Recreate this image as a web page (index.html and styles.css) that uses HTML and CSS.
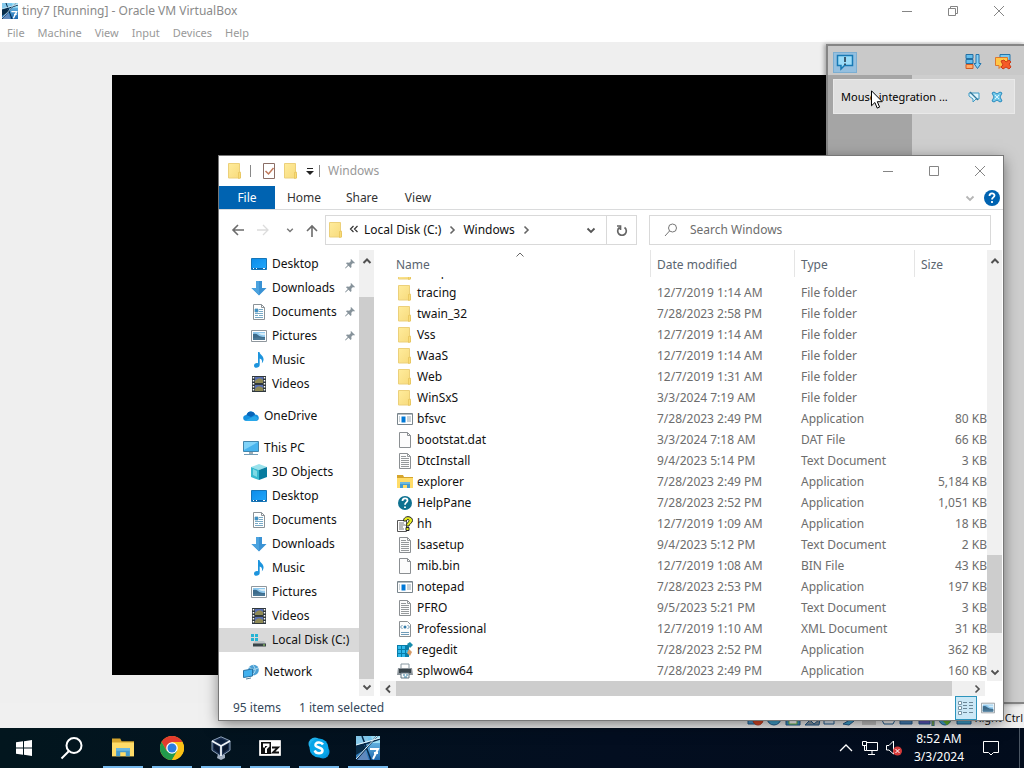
FILE: index.html
```
<!DOCTYPE html>
<html lang="en">
<head>
<meta charset="utf-8">
<meta name="viewport" content="width=device-width, initial-scale=1">
<title>tiny7 [Running] - Oracle VM VirtualBox</title>
<link rel="stylesheet" href="styles.css">
</head>
<body>
<svg class="sprite" aria-hidden="true">
  <defs>
    <linearGradient id="g-folder" x1="0" x2="1" y2="1"><stop offset="0" stop-color="#ffec9c"/><stop offset="1" stop-color="#f7da7c"/></linearGradient>
    <linearGradient id="g-blue" x1="0" x2="1" y2="1"><stop offset="0" stop-color="#0b8cea"/><stop offset="1" stop-color="#22a8fb"/></linearGradient>
    <linearGradient id="g-tiny" x1="0" x2="0" y2="1"><stop offset="0" stop-color="#7fd0f5"/><stop offset="1" stop-color="#1e68ae"/></linearGradient>
  </defs>
  <symbol id="folder" viewBox="0 0 16 16"><path d="M1.500.5h11v9.500l1 1v4h-12z" fill="url(#g-folder)" stroke="#ecd07a"/><path d="M11.500 9.500l2-.5v6l-2 .5z" fill="#f9dc79" stroke="#e3bd51" stroke-width=".6"/></symbol>
  <symbol id="desktop" viewBox="0 0 16 16"><path d="M.5 2.500h15v11H.5z" fill="url(#g-blue)" stroke="#1675b7"/><path d="M1 12.500h14" stroke="#0c64a9"/><path d="M2 12.500h1m2 0h1m6 0h2" stroke="#fff"/></symbol>
  <symbol id="download" viewBox="0 0 16 16"><path d="M5 1h6v7h4.500L8 15.500.5 8H5z" fill="#3a92d4"/><path d="M5 1h3v14L.5 8H5z" fill="#4ca3df"/></symbol>
  <symbol id="document" viewBox="0 0 16 16"><path d="M2.500.5h8l3 3v12h-11z" fill="#fff" stroke="#8b9297"/><path d="M10.500.5v3h3" fill="none" stroke="#8b9297"/><path d="M4 5h3v3H4zm4 .5h4m-4 2h4m-8 2h8m-8 2h3m1 0h4m-8 2h8" fill="#338fcd" stroke="#5794b8" stroke-width=".8"/></symbol>
  <symbol id="picture" viewBox="0 0 16 16"><path d="M.5 2.500h15v11H.5z" fill="#fff" stroke="#8f979d"/><path d="M2 4h12v8H2z" fill="#8fc8ed"/><path d="M2 6q3-1 5 1t7 2v3H2z" fill="#3c6b8b"/><path d="M2 10q5-1 12 0v2H2z" fill="#4a7896"/><path d="M7 5h7v2q-3 1-7-2" fill="#d6edf9"/></symbol>
  <symbol id="music" viewBox="0 0 16 16"><path d="M7 0h1.500c.3 3 4.500 3.600 4 8-.2 1.600-1 2.500-1.700 3.300.7-2.700-.1-4.200-2.100-4.800V13c0 3-5.700 4-5.700.7C3 11.500 5.400 10.500 7 11.200z" fill="#1d94dd"/></symbol>
  <symbol id="video" viewBox="0 0 16 16"><path d="M1 0h14v16H1z" fill="#30383d"/><path d="M4 1h8v6H4zM4 9h8v6H4z" fill="#586fb4"/><path d="M4 5q4-5 8-1v3H4zM4 13q3-5 8-1v3H4z" fill="#8f8a55"/><path d="M2.500 1v14m11-14v14" stroke="#fff" stroke-width="1.500" stroke-dasharray="1.500 1.500"/></symbol>
  <symbol id="cloud" viewBox="0 0 16 16"><path d="M4 13C-1 13-1 7 3.500 7 5 2 11 3 12 6.500c5 0 5 6.500.5 6.500z" fill="#1490df"/><path d="M3.500 7C5 2 11 3 12 6.500L8 9z" fill="#0864b8"/><path d="M2 12.500L12 8q5 2 1 5H4z" fill="#29a8ea"/></symbol>
  <symbol id="pc" viewBox="0 0 16 16"><path d="M.5 1.500h15v10H.5z" fill="#47b3ee" stroke="#4386ad"/><path d="M1 2h14L1 10z" fill="#80d3f9"/><path d="M6 12h4v2H6z" fill="#9dacb5"/><path d="M1 14.500h14" stroke="#719bb5"/></symbol>
  <symbol id="cube" viewBox="0 0 16 16"><path d="M0 3l8-3 8 3-8 3z" fill="#9ae2ec"/><path d="M0 3l8 3v10l-8-3z" fill="#36b9cf"/><path d="M8 6l8-3v10l-8 3z" fill="#087c9f"/><path d="M2 5l4 2v6l-4-2z" fill="#7dd9e5"/></symbol>
  <symbol id="disk" viewBox="0 0 16 16"><path d="M0 2h3v3H0zm4 0h3v3H4zM0 6h3v3H0zm4 0h3v3H4z" fill="#25b4d4"/><path d="M4 9h9l2 3H2z" fill="#bdc3c6"/><path d="M2 11.500h13v3H2z" fill="#394347"/><path d="M12 13h2" stroke="#9de067"/></symbol>
  <symbol id="network" viewBox="0 0 16 16"><circle cx="10.500" cy="6" r="5.300" fill="#4b9fd4"/><path d="M6 3q4 4 9 1M10 1q5 6-1 10" stroke="#b0dcf0" fill="none"/><path d="M.5 6.500l9-1.500v7l-9 1.500z" fill="#42b1ee" stroke="#2b74a5"/><path d="M3 15l5-1" stroke="#557d95"/></symbol>
  <symbol id="pin" viewBox="0 0 10 10"><path d="M6 0l4 4-1 .5L8 4 6.300 5.700 6.500 8l-.9.9L3.500 6.800.5 9.500 0 9l2.800-2.900L1 4.300l.9-.8 2.300.2L6 2l-.5-1z" fill="#87939b"/></symbol>
  <symbol id="app" viewBox="0 0 16 16"><path d="M.5 2.500h15v11H.5z" fill="#fff" stroke="#79858c"/><path d="M1 3.500h14" stroke="#b4bdc3"/><path d="M4.500 5.500h4v6h-4z" fill="#0078d7"/><path d="M2 6h1m-1 2h1m-1 2h1m7-4h4m-4 2h4m-4 2h4" stroke="#91a4b0"/></symbol>
  <symbol id="blank" viewBox="0 0 16 16"><path d="M2.500.5h8l3 3v12h-11z" fill="#fcfcfc" stroke="#8b8f92"/><path d="M10.500.5v3h3" fill="none" stroke="#8b8f92"/></symbol>
  <symbol id="text" viewBox="0 0 16 16"><path d="M2.500.5h8l3 3v12h-11z" fill="#fcfcfc" stroke="#8b8f92"/><path d="M10.500.5v3h3M4 3.500h5m-5 2h8m-8 2h8m-8 2h8m-8 2h8m-8 2h8" fill="none" stroke="#95999b"/></symbol>
  <symbol id="xml" viewBox="0 0 16 16"><path d="M2.500.5h8l3 3v12h-11z" fill="#fcfcfc" stroke="#8b8f92"/><path d="M5.500 4l-2 2 2 2m5-4l2 2-2 2M4 11.500h8m-8 2h8" fill="none" stroke="#6f9bb8"/><circle cx="8" cy="6" r="1.500" fill="#347ba9"/></symbol>
  <symbol id="explorer" viewBox="0 0 16 16"><path d="M0 1h6l1 2h9v11H0z" fill="#d5a52d"/><path d="M0 4h16v10H0z" fill="#ffdc68"/><path d="M3 14V8h10v6h-3v-3H6v3z" fill="#459bce"/><path d="M3 8h10v2H3z" fill="#6cb8df"/></symbol>
  <symbol id="help" viewBox="0 0 16 16"><circle cx="8" cy="8" r="7" fill="#0e7190"/><path d="M5.500 6c0-3.500 5-3.500 5-.5C10.500 7.500 8 7.300 8 9.800M8 11.500v1.500" fill="none" stroke="#fff" stroke-width="1.800"/></symbol>
  <symbol id="hh" viewBox="0 0 16 16"><path d="M.5 4.500h9v11h-9z" fill="#fff" stroke="#555"/><path d="M2 7h5m-5 2h6m-6 2h4m-4 2h5" stroke="#777"/><path d="M6.500 5c0-6 9-5.500 9-.5 0 3-3.500 3-3.500 5.500H9c0-3 3-3.500 3-5.500 0-1.500-2.500-1.500-2.500.5zM9 11.500h3v3H9z" fill="#e7ed22" stroke="#222"/></symbol>
  <symbol id="regedit" viewBox="0 0 16 16"><path d="M0 3h12v12H0z" fill="#087da9"/><path d="M1 4h3v3H1zm4 0h3v3H5zM1 8h3v3H1zm4 0h3v3H5zm4 0h3v3H9zM1 12h3v3H1zm4 0h3v3H5z" fill="#30b9eb"/><path d="M10 2l3-2 3 3-3 3z" fill="#168cac"/><path d="M12 7l3 3-2 4-3-3z" fill="#d59b67"/></symbol>
  <symbol id="printer" viewBox="0 0 16 16"><path d="M4 1h8v5H4z" fill="#fff" stroke="#8898a1"/><path d="M1 5h14l1 7H0z" fill="#8c949a"/><path d="M2 6h12v4H2z" fill="#38434a"/><path d="M4 10h8v5H4z" fill="#f8fbfc" stroke="#637580"/><path d="M6 12h2m1 0h2m-4 2h3" stroke="#347ca0"/></symbol>
  <symbol id="tiny" viewBox="0 0 24 24"><path d="M0 0h24v24H0z" fill="url(#g-tiny)"/><path d="M0 8l7-2 3 7-10 6z" fill="#082c48"/><path d="M0 0h11l2 6L0 9z" fill="#86c9eb"/><path d="M0 24l9-10 4 10z" fill="#5f89bd"/><path d="M15 0h9v7h-7z" fill="#9edff6"/><path d="M0 11L24 3M6 0l9 24M21 0L0 24" stroke="#06294a" stroke-width="1.500" fill="none"/><path d="M0 9l24-7M0 23L21 0" stroke="#e7f8ff"/><path d="M14 13h8l-5 10m1-6h4" stroke="#fff" stroke-width="2" fill="none"/></symbol>
  <symbol id="up" viewBox="0 0 10 10"><path d="M1.500 7L5 3.500 8.500 7" fill="none" stroke="#505050" stroke-width="2"/></symbol>
  <symbol id="up-thin" viewBox="0 0 10 10"><path d="M1.500 6.500L5 3l3.500 3.500" fill="none" stroke="#666"/></symbol>
  <symbol id="down" viewBox="0 0 10 10"><path d="M1.500 3.500L5 7l3.500-3.500" fill="none" stroke="currentColor" stroke-width="1.800"/></symbol>
  <symbol id="right" viewBox="0 0 10 10"><path d="M3.500 1.500L7 5 3.500 8.500" fill="none" stroke="currentColor" stroke-width="1.600"/></symbol>
  <symbol id="left" viewBox="0 0 10 10"><path d="M7 1.500L3.500 5 7 8.500" fill="none" stroke="#505050" stroke-width="1.800"/></symbol>
  <symbol id="w-min" viewBox="0 0 12 12"><path d="M1 6.500h10" stroke="currentColor"/></symbol>
  <symbol id="w-max" viewBox="0 0 12 12"><path d="M1.500 1.500h9v9h-9z" fill="none" stroke="currentColor"/></symbol>
  <symbol id="w-res" viewBox="0 0 12 12"><path d="M1.500 3.500h7v7h-7zM3.500 3.500v-2h7v7h-2" fill="none" stroke="currentColor"/></symbol>
  <symbol id="w-close" viewBox="0 0 12 12"><path d="M1 1l10 10M11 1L1 11" stroke="currentColor"/></symbol>
</svg>

<main class="vm">
  <header class="vm-title">
    <svg class="i16"><use href="#tiny"/></svg>
    <h1 class="vm-name">tiny7 [Running] - Oracle VM VirtualBox</h1>
    <div class="win-controls">
      <button aria-label="Minimize VM"><svg class="i12"><use href="#w-min"/></svg></button>
      <button aria-label="Restore VM"><svg class="i12"><use href="#w-res"/></svg></button>
      <button aria-label="Close VM"><svg class="i12"><use href="#w-close"/></svg></button>
    </div>
  </header>
  <nav class="vm-menu" aria-label="Virtual machine">
    <button>File</button><button>Machine</button><button>View</button><button>Input</button><button>Devices</button><button>Help</button>
  </nav>
  <section class="vm-view"><div class="guest"></div></section>
  <footer class="vm-status">
    <div class="vm-indicators" aria-hidden="true">
      <svg viewBox="0 0 228 16"><g stroke="#225d8e"><path d="M1 2h9v12H1z" fill="#4b9ed5"/><circle cx="11" cy="10" r="5" fill="#df4a28" stroke="#b43a20"/><circle cx="27" cy="8" r="7" fill="#43a7d4"/><path d="M39 1h14v14H39z" fill="#3f9acc"/><path d="M42 8h8v6h-8z" fill="#fff" stroke="#73b943"/><path d="M58 15l5-5 4 4 6-5-1 6z" fill="#8094a3"/><path d="M77 6h10v8H77z" fill="#dbe9f5"/><path d="M96 14l5-3 6-5v5l-5 4z" fill="#43a7d4"/><path d="M134 8h15l-3 6h-9z" fill="#f5f5f5"/><path d="M153 3h12v11h-12z" fill="#4a86be"/><path d="M172 2h11v12h-11z" fill="#615ac0"/><path d="M185 4h2v12h-2z" fill="#b8e31b"/><circle cx="198" cy="9" r="6" fill="#43a7d4"/><path d="M197 10l3 3 6-7" fill="none" stroke="#65b72a" stroke-width="3"/><path d="M210 2h14v12h-14z" fill="#43a7d4"/></g><path d="M115 3h14v12h-14z" fill="#c4c4c4"/></svg>
    </div>
    <span class="host-key">Right Ctrl</span>
  </footer>

  <aside class="notices" aria-label="Notifications">
    <div class="notice-bar">
      <button class="notice-toggle" aria-label="Messages"><svg class="i18" viewBox="0 0 18 18"><path d="M1.500 2.500h15v10H8.500L5 16v-3.500H1.500z" fill="#9bdcf8" stroke="#1879b4" stroke-width="1.500"/><path d="M9 4v5m0 1.500V12" stroke="#1c2f42" stroke-width="1.500"/></svg></button>
      <button aria-label="Sort messages"><svg class="i18" viewBox="0 0 18 18"><path d="M2 1.500h7v4H2zm0 5h7v4H2z" fill="#64bdec" stroke="#236fa2"/><path d="M2 11.500h7v4H2z" fill="#ffac66" stroke="#d35a25"/><path d="M12 1.500h3v9h2l-3.500 5-3.500-5h2z" fill="#86d2f8" stroke="#2475ac"/></svg></button>
      <button aria-label="Remove all messages"><svg class="i18" viewBox="0 0 18 18"><path d="M6 1.500h10v8H6z" fill="#78c8ef" stroke="#2675a8"/><path d="M1.500 4.500h12v8H8l-3 3v-3H1.500z" fill="#ffc747" stroke="#df752c"/><path d="M7 8l3-1 2 2 3-2 2 2-2 2 2 3-2 2-3-2-3 2-2-2 2-2z" fill="#f65b27" stroke="#cc3c18"/></svg></button>
    </div>
    <div class="notice">
      <span class="notice-text">Mouse integration ...</span>
      <button aria-label="Hide message"><svg class="i12" viewBox="0 0 12 12"><path d="M1 2h10v6H8l-3 3V8L1 5z" fill="#e0f4fc" stroke="#3e9ac4"/><path d="M2 1l8 8" stroke="#317699" stroke-width="1.200"/></svg></button>
      <button aria-label="Close message"><svg class="i12" viewBox="0 0 12 12"><path d="M1 2l2-1 3 2 3-2 2 1-2 4 2 4-2 1-3-2-3 2-2-1 2-4z" fill="#76ccec" stroke="#288abd"/><path d="M4 4l4 4m0-4L4 8" stroke="#d8f3fd"/></svg></button>
      <svg class="cursor" viewBox="0 0 12 19" aria-hidden="true"><path d="M.5.800v15l3.400-3.300 2.300 5.600 2.400-1-2.300-5.400h5z" fill="#fff" stroke="#000"/></svg>
    </div>
  </aside>
</main>

<section class="explorer" aria-label="Windows folder">
  <header class="ex-title">
    <svg class="i16"><use href="#folder"/></svg><span class="rule"></span>
    <button aria-label="Properties"><svg class="i16" viewBox="0 0 16 16"><path d="M2.500.5h11v15h-11z" fill="#fff" stroke="#8b6e66"/><path d="M4.500 8l3 3 5-6" fill="none" stroke="#c07859" stroke-width="1.500"/></svg></button>
    <button aria-label="New folder"><svg class="i16"><use href="#folder"/></svg></button>
    <button class="customize" aria-label="Customize toolbar"><svg class="i10" viewBox="0 0 10 10"><path d="M2 2.500h6" stroke="#222"/><path d="M1 5h8L5 9z" fill="#222"/></svg></button>
    <span class="rule"></span><h2 class="ex-name">Windows</h2>
    <div class="win-controls">
      <button aria-label="Minimize"><svg class="i12"><use href="#w-min"/></svg></button>
      <button aria-label="Maximize"><svg class="i12"><use href="#w-max"/></svg></button>
      <button aria-label="Close"><svg class="i12"><use href="#w-close"/></svg></button>
    </div>
  </header>
  <div class="ribbon">
    <button class="tab tab-file">File</button><button class="tab">Home</button><button class="tab">Share</button><button class="tab">View</button>
    <div class="ribbon-end"><button class="pale" aria-label="Expand ribbon"><svg class="i10"><use href="#down"/></svg></button>
    <button aria-label="Help"><svg class="i16" viewBox="0 0 16 16"><circle cx="8" cy="8" r="8" fill="#0063b1"/><path d="M5.500 6c0-3.300 5-3.300 5-.4C10.500 7.400 8 7.400 8 9.500M8 11v2" fill="none" stroke="#fff" stroke-width="1.800"/></svg></button></div>
  </div>
  <div class="address-row">
    <div class="history">
      <button aria-label="Back"><svg class="i14" viewBox="0 0 14 14"><path d="M13 7H2m5-5L2 7l5 5" fill="none" stroke="#6c6c6c" stroke-width="1.600"/></svg></button>
      <button aria-label="Forward"><svg class="i14" viewBox="0 0 14 14"><path d="M1 7h11M7 2l5 5-5 5" fill="none" stroke="#dcdcdc" stroke-width="1.300"/></svg></button>
      <button class="recent" aria-label="Recent locations"><svg class="i8"><use href="#down"/></svg></button>
      <button aria-label="Up"><svg class="i14" viewBox="0 0 14 14"><path d="M7 14V3M2 8l5-5 5 5" fill="none" stroke="#6c6c6c" stroke-width="1.600"/></svg></button>
    </div>
    <div class="address">
      <svg class="i16"><use href="#folder"/></svg>
      <button class="chev" aria-label="Show parents"><svg class="i10" viewBox="0 0 10 10"><path d="M4.500 1l-3 3 3 3m4-6l-3 3 3 3" fill="none" stroke="#333" stroke-width="1.200"/></svg></button>
      <button>Local Disk (C:)</button><svg class="i10 grey"><use href="#right"/></svg><button>Windows</button><svg class="i10 grey"><use href="#right"/></svg>
      <button class="address-drop" aria-label="Previous locations"><svg class="i10"><use href="#down"/></svg></button>
      <button class="refresh" aria-label="Refresh"><svg class="i12" viewBox="0 0 12 12"><path d="M3.500 3.500a4.300 4.300 0 1 0 5 0M4.500 6V2H1" fill="none" stroke="#666" stroke-width="1.700"/></svg></button>
    </div>
    <label class="search"><svg class="i14" viewBox="0 0 14 14"><circle cx="8.500" cy="5" r="4" fill="none" stroke="#777"/><path d="M5.500 8L1 13" stroke="#777"/></svg><input type="text" placeholder="Search Windows" aria-label="Search Windows"></label>
  </div>
  <div class="ex-body">
    <div class="nav-pane">
      <nav class="tree" aria-label="Folders">
        <a class="child" href="#"><svg class="i16"><use href="#desktop"/></svg>Desktop<svg class="pin"><use href="#pin"/></svg></a>
        <a class="child" href="#"><svg class="i16"><use href="#download"/></svg>Downloads<svg class="pin"><use href="#pin"/></svg></a>
        <a class="child" href="#"><svg class="i16"><use href="#document"/></svg>Documents<svg class="pin"><use href="#pin"/></svg></a>
        <a class="child" href="#"><svg class="i16"><use href="#picture"/></svg>Pictures<svg class="pin"><use href="#pin"/></svg></a>
        <a class="child" href="#"><svg class="i16"><use href="#music"/></svg>Music</a>
        <a class="child" href="#"><svg class="i16"><use href="#video"/></svg>Videos</a>
        <a class="root" href="#"><svg class="i16"><use href="#cloud"/></svg>OneDrive</a>
        <a class="root" href="#"><svg class="i16"><use href="#pc"/></svg>This PC</a>
        <a class="child" href="#"><svg class="i16"><use href="#cube"/></svg>3D Objects</a>
        <a class="child" href="#"><svg class="i16"><use href="#desktop"/></svg>Desktop</a>
        <a class="child" href="#"><svg class="i16"><use href="#document"/></svg>Documents</a>
        <a class="child" href="#"><svg class="i16"><use href="#download"/></svg>Downloads</a>
        <a class="child" href="#"><svg class="i16"><use href="#music"/></svg>Music</a>
        <a class="child" href="#"><svg class="i16"><use href="#picture"/></svg>Pictures</a>
        <a class="child" href="#"><svg class="i16"><use href="#video"/></svg>Videos</a>
        <a class="child selected" href="#"><svg class="i16"><use href="#disk"/></svg>Local Disk (C:)</a>
        <a class="root" href="#"><svg class="i16"><use href="#network"/></svg>Network</a>
      </nav>
      <div class="scroll-v"><svg class="i10"><use href="#up"/></svg><div class="track nav-track"><div class="thumb"></div></div><svg class="i10"><use href="#down"/></svg></div>
    </div>
    <div class="file-pane">
      <div class="file-area">
        <table class="files">
          <thead><tr><th>Name<svg class="sort"><use href="#up-thin"/></svg></th><th>Date modified</th><th>Type</th><th>Size</th></tr></thead>
          <tbody>
            <tr><td><svg class="i16"><use href="#folder"/></svg>Temp</td><td></td><td></td><td></td></tr>
            <tr><td><svg class="i16"><use href="#folder"/></svg>tracing</td><td>12/7/2019 1:14 AM</td><td>File folder</td><td></td></tr>
            <tr><td><svg class="i16"><use href="#folder"/></svg>twain_32</td><td>7/28/2023 2:58 PM</td><td>File folder</td><td></td></tr>
            <tr><td><svg class="i16"><use href="#folder"/></svg>Vss</td><td>12/7/2019 1:14 AM</td><td>File folder</td><td></td></tr>
            <tr><td><svg class="i16"><use href="#folder"/></svg>WaaS</td><td>12/7/2019 1:14 AM</td><td>File folder</td><td></td></tr>
            <tr><td><svg class="i16"><use href="#folder"/></svg>Web</td><td>12/7/2019 1:31 AM</td><td>File folder</td><td></td></tr>
            <tr><td><svg class="i16"><use href="#folder"/></svg>WinSxS</td><td>3/3/2024 7:19 AM</td><td>File folder</td><td></td></tr>
            <tr><td><svg class="i16"><use href="#app"/></svg>bfsvc</td><td>7/28/2023 2:49 PM</td><td>Application</td><td>80 KB</td></tr>
            <tr><td><svg class="i16"><use href="#blank"/></svg>bootstat.dat</td><td>3/3/2024 7:18 AM</td><td>DAT File</td><td>66 KB</td></tr>
            <tr><td><svg class="i16"><use href="#text"/></svg>DtcInstall</td><td>9/4/2023 5:14 PM</td><td>Text Document</td><td>3 KB</td></tr>
            <tr><td><svg class="i16"><use href="#explorer"/></svg>explorer</td><td>7/28/2023 2:49 PM</td><td>Application</td><td>5,184 KB</td></tr>
            <tr><td><svg class="i16"><use href="#help"/></svg>HelpPane</td><td>7/28/2023 2:52 PM</td><td>Application</td><td>1,051 KB</td></tr>
            <tr><td><svg class="i16"><use href="#hh"/></svg>hh</td><td>12/7/2019 1:09 AM</td><td>Application</td><td>18 KB</td></tr>
            <tr><td><svg class="i16"><use href="#text"/></svg>lsasetup</td><td>9/4/2023 5:12 PM</td><td>Text Document</td><td>2 KB</td></tr>
            <tr><td><svg class="i16"><use href="#blank"/></svg>mib.bin</td><td>12/7/2019 1:08 AM</td><td>BIN File</td><td>43 KB</td></tr>
            <tr><td><svg class="i16"><use href="#app"/></svg>notepad</td><td>7/28/2023 2:53 PM</td><td>Application</td><td>197 KB</td></tr>
            <tr><td><svg class="i16"><use href="#text"/></svg>PFRO</td><td>9/5/2023 5:21 PM</td><td>Text Document</td><td>3 KB</td></tr>
            <tr><td><svg class="i16"><use href="#xml"/></svg>Professional</td><td>12/7/2019 1:10 AM</td><td>XML Document</td><td>31 KB</td></tr>
            <tr><td><svg class="i16"><use href="#regedit"/></svg>regedit</td><td>7/28/2023 2:52 PM</td><td>Application</td><td>362 KB</td></tr>
            <tr><td><svg class="i16"><use href="#printer"/></svg>splwow64</td><td>7/28/2023 2:49 PM</td><td>Application</td><td>160 KB</td></tr>
          </tbody>
        </table>
        <div class="scroll-v"><svg class="i10"><use href="#up"/></svg><div class="track list-track"><div class="thumb"></div></div><svg class="i10"><use href="#down"/></svg></div>
      </div>
      <div class="scroll-h"><svg class="i10"><use href="#left"/></svg><div class="track-h"><div class="thumb"></div></div><svg class="i10"><use href="#right"/></svg></div>
    </div>
  </div>
  <footer class="ex-status">
    <span>95 items</span><span>1 item selected</span>
    <div class="views">
      <button class="view-on" aria-label="Details view"><svg class="i16" viewBox="0 0 16 16"><path d="M.5 1.500h3v3h-3zm0 5h3v3h-3zm0 5h3v3h-3z" fill="#fff" stroke="#7896a6"/><path d="M5 2.500h4m2 0h4M5 5.500h4m2 0h4M5 8.500h4m2 0h4M5 12.500h4m2 0h4" stroke="#6b8796"/></svg></button>
      <button aria-label="Large icons"><svg class="i14"><use href="#picture"/></svg></button>
    </div>
  </footer>
</section>

<footer class="taskbar">
  <button class="system" aria-label="Start"><svg class="i16" viewBox="0 0 16 16"><path d="M0 2.300l7-1v6.200H0zM8 1.200L16 0v7.500H8zM0 8.500h7v6.200l-7-1zm8 0h8V16l-8-1.200z" fill="#fff"/></svg></button>
  <button class="system" aria-label="Search"><svg class="i24" viewBox="0 0 24 24"><circle cx="14" cy="9.500" r="7.500" fill="none" stroke="#fff" stroke-width="2"/><path d="M9 15l-7.500 7.500" stroke="#fff" stroke-width="2"/></svg></button>
  <div class="apps">
    <button aria-label="File Explorer"><svg class="i22"><use href="#explorer"/></svg></button>
    <button aria-label="Chrome"><svg class="i24" viewBox="0 0 24 24"><circle cx="12" cy="12" r="12" fill="#fbc116"/><path d="M1.600 6A12 12 0 0 1 22.400 6H12l-5.200 9z" fill="#e33b2e"/><path d="M1.600 6A12 12 0 0 0 12 24l5.200-9H6.800z" fill="#229a4c"/><path d="M12 6h10.400A12 12 0 0 1 12 24l5.200-9z" fill="#fbc116"/><circle cx="12" cy="12" r="5.800" fill="#fff"/><circle cx="12" cy="12" r="4.500" fill="#2a7de1"/></svg></button>
    <button aria-label="VirtualBox"><svg class="i24" viewBox="0 0 24 24"><path d="M9 18l3-2 4 3v3l-4 2-4-2z" fill="#a3b0c1"/><path d="M12 .8l9 4v9.500l-9 6-9-6V4.800z" fill="#1b3050" stroke="#8fa3bb"/><path d="M3 5l9 5 9-5M12 10v10" fill="none" stroke="#f0f5fa" stroke-width="1.800"/><path d="M7 5l5-2 5 2-5 3z" fill="#0b1f3c"/><path d="M5 8l5 3v6l-5-4zm14 0l-5 3v6l5-4z" fill="#08162d"/></svg></button>
    <button aria-label="7-Zip"><svg class="i22" viewBox="0 0 22 22"><path d="M.5 3.500h21v15H.5z" fill="#fff" stroke="#ddd"/><path d="M2 5h10v12H2z" fill="#111"/><path d="M4 6.500h6.500v3L8 12v4H6v-4.500l2.500-2.500H6v1.500H4z" fill="#fff"/><path d="M13 10.500h6l-5 5h6" fill="none" stroke="#111" stroke-width="1.900"/></svg></button>
    <button aria-label="Skype"><svg class="i22" viewBox="0 0 22 22"><circle cx="7" cy="7" r="6.500" fill="#22b4ef"/><circle cx="15" cy="15" r="6.500" fill="#0997df"/><circle cx="11" cy="11" r="9.500" fill="#08a6e9"/><path d="M15 7.500C13 4.500 7 5 7.500 8.300 8 11 14.500 10 14.500 13.500 14.500 17 8 17.300 6.700 13.500" fill="none" stroke="#fff" stroke-width="2.500"/></svg></button>
    <button aria-label="tiny7 virtual machine"><svg class="i24"><use href="#tiny"/></svg></button>
  </div>
  <div class="tray">
    <button aria-label="Hidden icons"><svg class="i14" viewBox="0 0 14 14"><path d="M1 10l6-6 6 6" fill="none" stroke="#fff" stroke-width="1.300"/></svg></button>
    <button aria-label="Network"><svg class="i16" viewBox="0 0 16 16"><path d="M4.500 2.500h11v8h-11zM10 11v3M6 14.500h7M.5 1.500h4v4h-4zM2.500 6v4.500h2" fill="none" stroke="#fff"/></svg></button>
    <button aria-label="Volume muted"><svg class="i16" viewBox="0 0 16 16"><path d="M.5 5.500H3L7.500 1v13L3 10H.5z" fill="none" stroke="#fff"/><circle cx="11.500" cy="11" r="4.500" fill="#d63a3a"/><path d="M9.500 9l4 4m0-4l-4 4" stroke="#fff"/></svg></button>
    <button class="clock"><span>8:52 AM</span><span>3/3/2024</span></button>
    <button class="action" aria-label="Action center"><svg class="i16" viewBox="0 0 16 16"><path d="M.5 1.500h15v11h-5L8 15l-2.500-2.500h-5z" fill="none" stroke="#fff"/></svg></button>
    <button class="peek" aria-label="Show desktop"></button>
  </div>
</footer>
</body>
</html>
```
FILE: styles.css
```
* { box-sizing: border-box; }
body {
  margin: 0; height: 100vh; min-height: 600px; display: flex; flex-direction: column;
  position: relative; overflow: hidden; background: #f0f0f0; color: #111;
  font: 12px/16px "Noto Sans", "Open Sans", sans-serif;
}
svg { flex: none; display: block; }
button, input { font: inherit; color: inherit; background: none; border: 0; padding: 0; margin: 0; }
button { display: flex; align-items: center; justify-content: center; white-space: nowrap; }
a { color: inherit; text-decoration: none; }
h1, h2 { margin: 0; font: inherit; }
.sprite { position: absolute; width: 0; height: 0; }
.i8 { width: 8px; height: 8px; }
.i10 { width: 10px; height: 10px; }
.i12 { width: 12px; height: 12px; }
.i14 { width: 14px; height: 14px; }
.i16 { width: 16px; height: 16px; }
.i18 { width: 18px; height: 18px; }
.i22 { width: 22px; height: 22px; }
.i24 { width: 24px; height: 24px; }
.grey { color: #666; }

/* Virtual machine window */
.vm { flex: 1; min-height: 0; display: flex; flex-direction: column; position: relative; }
.vm-title { height: 24px; background: #fff; display: flex; align-items: center; gap: 4px; padding: 0 2px 2px; color: #8a8a8a; }
.win-controls { display: flex; margin-left: auto; color: #858585; align-self: stretch; }
.win-controls button { width: 46px; }
.vm-menu { height: 18px; background: #fff; display: flex; gap: 13px; padding: 0 7px; color: #999; font-size: 11px; }
.vm-view { flex: 1; min-height: 0; background: #efefef; padding: 33px 112px 28px; display: flex; }
.guest { flex: 1; background: #000; }
.vm-status { height: 25px; background: #f0f0f0; display: flex; justify-content: flex-end; align-items: center; padding: 4px 1px 0; font-size: 11px; }
.vm-indicators svg { width: 228px; height: 16px; }

.notices {
  position: absolute; top: 44px; right: 0; bottom: 24px; width: 198px;
  background: rgba(198, 198, 198, .83); border: 2px solid #858585; border-right: 0;
  padding: 0 9px 0 5px; box-shadow: -2px 0 4px rgba(0, 0, 0, .3);
}
.notice-bar { display: flex; gap: 12px; height: 29px; align-items: center; background: #c9c9c9; margin: 0 -9px 0 -5px; padding: 3px 12px 0 5px; }
.notice-bar button:nth-child(2) { margin-left: auto; }
.notice-toggle { width: 24px; height: 21px; background: #94bfdf; border: 1px solid #7baed2; }
.notice { position: relative; margin-top: 4px; height: 35px; background: #e0e0e0; border: 1px solid #e9e9e9; display: flex; align-items: center; gap: 11px; padding: 0 11px 0 7px; font-size: 11px; color: #000; }
.notice-text { flex: 1; white-space: nowrap; }
.cursor { position: absolute; left: 37px; top: 10px; width: 12px; height: 19px; }

/* Explorer window */
.explorer {
  position: absolute; left: 219px; right: 21px; top: 156px; bottom: 48px;
  display: flex; flex-direction: column; background: #fff;
  outline: 1px solid #777; box-shadow: 0 4px 14px rgba(0, 0, 0, .5);
}
.ex-title { height: 30px; display: flex; align-items: center; gap: 6px; padding-left: 8px; color: #999; }
.rule { width: 1px; height: 12px; background: #888; margin: 0 4px 0 1px; }
.customize { margin-right: -3px; }
.ex-name { margin-left: -2px; }
.ribbon { height: 24px; display: flex; border-bottom: 1px solid #dadbdc; color: #333; }
.tab { width: 58px; }
.tab:last-of-type { width: 54px; }
.tab-file { width: 56px; background: #0063b1; color: #fff; }
.ribbon-end { margin-left: auto; display: flex; align-items: center; gap: 9px; padding-right: 3px; }
.pale { color: #b5b5b5; }
.address-row { height: 40px; display: flex; align-items: center; padding-right: 12px; }
.history { flex: none; width: 106px; display: flex; align-items: center; justify-content: space-between; padding: 0 6px 0 12px; }
.recent { color: #777; margin-left: 4px; }
.address { flex: 312 1 312px; height: 30px; border: 1px solid #d9d9d9; display: flex; align-items: center; gap: 5px; padding-left: 2px; min-width: 0; }
.address .grey { margin: 0 1px; }
.address-drop { margin-left: auto; width: 20px; color: #555; }
.refresh { width: 30px; align-self: stretch; border-left: 1px solid #d9d9d9; }
.search { flex: 342 1 342px; margin-left: 12px; height: 30px; border: 1px solid #d9d9d9; display: flex; align-items: center; gap: 12px; padding-left: 14px; min-width: 0; }
.search input { flex: 1; min-width: 0; outline: 0; }
.search input::placeholder { color: #6d6d6d; opacity: 1; }

.ex-body { flex: 1; min-height: 0; display: flex; }
.nav-pane { width: 156px; display: flex; overflow: hidden; }
.tree { width: 140px; padding-top: 2px; overflow: hidden; }
.tree a { display: flex; align-items: center; gap: 5px; height: 24px; white-space: nowrap; }
.tree .child { padding-left: 32px; padding-right: 4px; }
.tree .root { padding-left: 24px; margin: 8px 0 0; }
.tree .selected { background: #d9d9d9; }
.pin { width: 10px; height: 10px; margin-left: auto; }
.scroll-v { width: 15px; background: #f0f0f0; display: flex; flex-direction: column; align-items: center; padding: 6px 0 4px; gap: 3px; color: #505050; }
.track { flex: 1; width: 100%; display: flex; flex-direction: column; }
.thumb { background: #cdcdcd; }
.nav-track { padding-top: 28px; }
.nav-track .thumb { flex: 1; }
.list-track::before { content: ""; flex: 285 0 0; }
.list-track::after { content: ""; flex: 31 0 0; }
.list-track .thumb { flex: 78 0 0; }
.file-pane { flex: 1; min-width: 0; display: flex; flex-direction: column; padding-left: 5px; }
.file-area { flex: 1; min-height: 0; display: flex; padding-right: 1px; }
.files { flex: 1; min-width: 0; display: flex; flex-direction: column; color: #6d6d6d; }
.files thead { display: block; color: #5a6570; }
.files tbody { flex: 1; min-height: 0; display: flex; flex-direction: column; justify-content: flex-end; overflow: hidden; }
.files tr { flex: none; display: grid; grid-template-columns: minmax(0, 1fr) 144px 120px 73px; height: 21px; align-items: center; }
.files thead tr { height: 27px; align-items: stretch; }
.files th { font-weight: 400; text-align: left; padding: 7px 6px 0; border-left: 1px solid #e5e5e5; white-space: nowrap; }
.files th:first-child { border: 0; padding-left: 16px; position: relative; }
.sort { position: absolute; left: 50%; top: 0; width: 10px; height: 10px; }
.files td { padding: 0 0 0 7px; white-space: nowrap; }
.files td:first-child { display: flex; align-items: center; gap: 4px; padding-left: 17px; color: #111; }
.files td:last-child { text-align: right; padding: 0; }
.scroll-h { height: 15px; margin-right: 18px; background: #f0f0f0; display: flex; align-items: center; padding: 0 3px; gap: 3px; color: #505050; }
.track-h { flex: 1; align-self: stretch; display: flex; padding-right: 17px; }
.track-h .thumb { flex: 1; }
.ex-status { height: 24px; display: flex; align-items: center; gap: 18px; padding-left: 14px; color: #35485b; }
.views { margin-left: auto; display: flex; align-self: stretch; padding: 0 8px 0 0; gap: 4px; }
.view-on { width: 22px; background: #cbe8f6; border: 1px solid #2d95bd; }

/* Taskbar */
.taskbar { height: 40px; flex: none; display: flex; background: linear-gradient(90deg, #02161e, #030e20 60%, #020c1c); color: #fff; }
.system { width: 48px; }
.apps { display: flex; gap: 9px; padding-left: 7px; }
.apps button { width: 40px; border-top: 2px solid transparent; border-bottom: 2px solid #76b9ed; }
.tray { margin-left: auto; display: flex; align-items: stretch; }
.tray button { width: 24px; }
.tray .clock { width: 66px; flex-direction: column; line-height: 18px; }
.tray .action { width: 38px; }
.tray .peek { width: 14px; }
.tray .peek::after { content: ""; width: 1px; height: 40px; margin-left: 4px; background: #4b5663; }
```
